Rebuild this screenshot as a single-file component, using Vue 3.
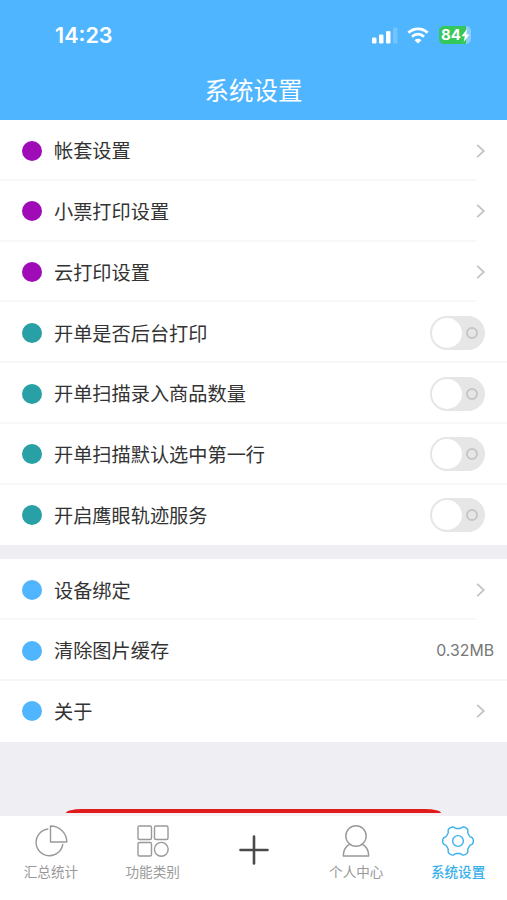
<template>
  <div class="page">
    <header class="header">
      <div class="status-bar">
        <span class="time">14:23</span>
        <div class="status-icons">
          <svg class="signal" width="26" height="18" viewBox="0 0 26 18">
            <rect x="0" y="11.500" width="4.500" height="6" rx="1.3" fill="#fff" />
            <rect x="7" y="8.500" width="4.500" height="9" rx="1.3" fill="#fff" />
            <rect x="14" y="5" width="4.500" height="12.5" rx="1.3" fill="#fff" />
            <rect x="21" y="1.500" width="4.5" height="16" rx="1.3" fill="#fff" opacity="0.2" />
          </svg>
          <svg class="wifi" width="22" height="17" viewBox="0 0 22 17">
            <path d="M1.4 5.8a13.6 13.6 0 0 1 19.2 0" fill="none" stroke="#fff" stroke-width="2.9" />
            <path d="M5 9.7a8.5 8.5 0 0 1 12 0" fill="none" stroke="#fff" stroke-width="2.7" />
            <path d="M11 16.6l-3.4-3.4a4.8 4.8 0 0 1 6.8 0z" fill="#fff" />
          </svg>
          <div class="battery">
            <span class="battery-level">84</span>
            <svg class="bolt" width="9" height="13" viewBox="0 0 8 13">
              <path d="M5.6 0L0 7.3h3.3L2.2 13 8 5.5H4.7z" fill="#fff" />
            </svg>
          </div>
        </div>
      </div>
      <h1 class="title">系统设置</h1>
    </header>

    <main class="content">
      <section v-for="(group, index) in groups" :key="index" class="group">
        <div v-for="item in group" :key="item.label" class="row" :class="item.type">
          <span class="dot" :class="item.color"></span>
          <span class="label">{{ item.label }}</span>
          <svg v-if="item.type === 'link'" class="arrow" width="10" height="16" viewBox="0 0 10 16">
            <path d="M1.2 1.8L7.8 8l-6.600 6.200" fill="none" stroke="#c4c4c4" stroke-width="1.8" />
          </svg>
          <button
            v-else-if="item.type === 'toggle'"
            type="button"
            class="switch"
            :class="{ on: item.value }"
            @click="item.value = !item.value"
          ></button>
          <span v-else class="value">{{ item.value }}</span>
        </div>
      </section>
      <div class="logout"></div>
    </main>

    <nav class="tabbar">
      <a
        v-for="tab in tabs"
        :key="tab.name"
        class="tab"
        :class="{ active: activeTab === tab.name }"
        @click="activeTab = tab.name"
      >
        <svg v-if="tab.name === 'stats'" class="icon" width="34" height="34" viewBox="0 0 34 34">
          <path d="M14.300 5A13.400 13.400 0 1 0 28.800 19.800" />
          <path d="M16.500 2v16h16.300A16.300 16 0 0 0 16.500 2z" />
        </svg>
        <svg v-else-if="tab.name === 'category'" class="icon" width="34" height="34" viewBox="0 0 34 34">
          <rect x="2" y="2" width="13.500" height="13.500" rx="1.500" />
          <rect x="18.500" y="2" width="13.500" height="13.500" rx="1.500" />
          <rect x="2" y="18.500" width="13.500" height="13.500" rx="1.500" />
          <circle cx="25.300" cy="25.300" r="6.900" />
        </svg>
        <svg v-else-if="tab.name === 'add'" class="plus" width="30" height="30" viewBox="0 0 30 30">
          <path d="M15 1.500v27M1.500 15h27" />
        </svg>
        <svg v-else-if="tab.name === 'user'" class="icon" width="34" height="34" viewBox="0 0 34 34">
          <circle cx="17" cy="12" r="10.200" />
          <path d="M10.800 20.200C7 22.300 4.300 26.500 4.300 32h25.400c0-5.500-2.700-9.700-6.500-11.800" />
        </svg>
        <svg v-else class="icon" width="34" height="34" viewBox="0 0 34 34">
          <path :d="gearPath" />
          <circle cx="17" cy="17" r="5.400" />
        </svg>
        <span v-if="tab.label" class="tab-label">{{ tab.label }}</span>
      </a>
    </nav>
  </div>
</template>

<script setup>
import { ref, reactive } from 'vue'

const activeTab = ref('settings')

const groups = reactive([
  [
    { label: '帐套设置', color: 'purple', type: 'link' },
    { label: '小票打印设置', color: 'purple', type: 'link' },
    { label: '云打印设置', color: 'purple', type: 'link' },
    { label: '开单是否后台打印', color: 'teal', type: 'toggle', value: false },
    { label: '开单扫描录入商品数量', color: 'teal', type: 'toggle', value: false },
    { label: '开单扫描默认选中第一行', color: 'teal', type: 'toggle', value: false },
    { label: '开启鹰眼轨迹服务', color: 'teal', type: 'toggle', value: false }
  ],
  [
    { label: '设备绑定', color: 'blue', type: 'link' },
    { label: '清除图片缓存', color: 'blue', type: 'text', value: '0.32MB' },
    { label: '关于', color: 'blue', type: 'link' }
  ]
])

const tabs = [
  { name: 'stats', label: '汇总统计' },
  { name: 'category', label: '功能类别' },
  { name: 'add', label: '' },
  { name: 'user', label: '个人中心' },
  { name: 'settings', label: '系统设置' }
]

// Gear outline with six rounded teeth
const gearPath = buildGear(17, 17, 13.9, 1.5)

function buildGear(cx, cy, radius, depth) {
  const points = []
  for (let deg = 0; deg < 360; deg += 3) {
    const angle = (deg * Math.PI) / 180
    const r = radius + depth * Math.tanh(1.8 * Math.cos(6 * angle))
    points.push(`${(cx + r * Math.cos(angle)).toFixed(2)} ${(cy + r * Math.sin(angle)).toFixed(2)}`)
  }
  return `M${points.join('L')}Z`
}
</script>

<style>
body {
  margin: 0;
  background: #eeeef3;
}
</style>

<style scoped>
.page {
  display: flex;
  flex-direction: column;
  height: 900px;
  overflow: hidden;
  background: #eeeef3;
  color: #333;
  font-family: "Liberation Sans", "Noto Sans CJK SC", sans-serif;
}

button {
  padding: 0;
  border: none;
}

.header {
  flex: none;
  height: 120px;
  background: #50b5ff;
  color: #fff;
}

.status-bar {
  display: flex;
  align-items: center;
  justify-content: space-between;
  height: 70px;
  padding: 0 36px 0 55px;
}

.time {
  font-family: Inter, sans-serif;
  font-size: 21.6px;
  font-weight: 600;
  line-height: 70px;
}

.status-icons {
  display: flex;
  align-items: center;
}

.wifi {
  margin: 0 10px 0 9px;
}

.battery {
  display: flex;
  align-items: center;
  width: 32px;
  height: 18px;
  border-radius: 5px;
  background: linear-gradient(to right, #34c759 27px, #8accfb 27px);
}

.battery-level {
  margin-left: 2px;
  font-family: Inter, sans-serif;
  font-size: 15px;
  font-weight: 700;
  line-height: 18px;
}

.title {
  margin: 0;
  padding-top: 2px;
  font-size: 24.5px;
  font-weight: 400;
  line-height: 40px;
  text-align: center;
}

.content {
  flex: 1;
  min-height: 0;
  overflow: hidden;
}

.group {
  margin-bottom: 14px;
  background: #fff;
}

.row {
  display: flex;
  align-items: center;
  box-sizing: border-box;
  height: 60.75px;
  padding: 0.6px 22px 0;
  background: linear-gradient(#f7f7f7, #f7f7f7) left bottom / 100% 2px no-repeat;
}

.row.link {
  padding-right: 21px;
  background-size: 476px 2px;
}

.row.text {
  padding-right: 13px;
}

.row:last-child {
  background: none;
}

.dot {
  width: 20px;
  height: 20px;
  margin-right: 12px;
  border-radius: 50%;
}

.dot.purple {
  background: #a00bb8;
}

.dot.teal {
  background: #29a0a5;
}

.dot.blue {
  background: #50b5ff;
}

.label {
  flex: 1;
  padding-top: 3.4px;
  font-size: 19.2px;
  line-height: 28px;
}

.value {
  color: #777;
  font-family: Inter, sans-serif;
  font-size: 15.8px;
}

.switch {
  position: relative;
  width: 55px;
  height: 34px;
  border-radius: 17px;
  background: #e6e6e6;
}

.switch::before {
  content: "";
  position: absolute;
  top: 2px;
  left: 2px;
  width: 30px;
  height: 30px;
  border-radius: 50%;
  background: #fff;
}

.switch::after {
  content: "";
  position: absolute;
  top: 11px;
  right: 7px;
  box-sizing: border-box;
  width: 12px;
  height: 12px;
  border: 2px solid #c6c6c6;
  border-radius: 50%;
}

.switch.on {
  background: #50b5ff;
}

.switch.on::before {
  left: 23px;
}

.logout {
  width: 375px;
  height: 4px;
  margin: 67.5px auto 0;
  border-radius: 16px 16px 0 0 / 4px 4px 0 0;
  background: #e11b1b;
  box-shadow: 0 3px 0 #f5f0f4;
}

.tabbar {
  display: flex;
  flex: none;
  height: 84px;
  margin-right: -2px;
  background: #fff;
}

.tab {
  display: flex;
  flex: 1;
  flex-direction: column;
  align-items: center;
  padding-top: 8px;
  color: #999;
  cursor: pointer;
}

.tab.active {
  color: #38b0ea;
}

.icon,
.plus {
  fill: none;
  stroke: currentColor;
  stroke-width: 1.4;
  stroke-linejoin: round;
}

.plus {
  margin-top: 11px;
  color: #4a4a4a;
  stroke-width: 2.6;
  stroke-linecap: round;
}

.tab-label {
  margin-top: 5px;
  font-size: 13.6px;
  line-height: 20px;
}

.tab.active .tab-label {
  font-weight: 500;
}
</style>
